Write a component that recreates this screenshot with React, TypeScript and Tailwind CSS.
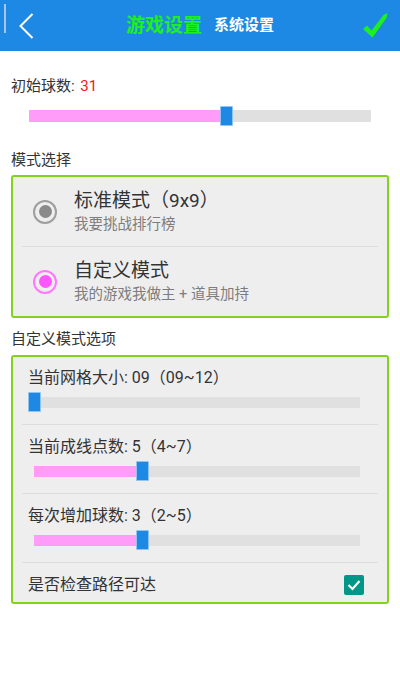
import React from "react";

type SliderProps = {
  fraction: number;
  trackH: number;
};

function Slider({ fraction, trackH }: SliderProps) {
  // thumb is 13px wide, centred on the value
  return (
    <div className="relative flex h-[20px] items-center">
      <div className="w-full bg-[#e0e0e0]" style={{ height: trackH }}>
        <div
          className="h-full bg-[#ff9cf9]"
          style={{ width: `calc(${fraction * 100}% - 6.5px)` }}
        />
      </div>
      <div
        className="absolute top-0 h-[20px] w-[13px] rounded-[1px] border border-[#8ec3f2] bg-[#1e88e5]"
        style={{ left: `calc(${fraction * 100}% - 6.5px)` }}
      />
    </div>
  );
}

function Radio({ on }: { on: boolean }) {
  return (
    <div
      className={
        on
          ? "flex h-[24px] w-[24px] items-center justify-center rounded-full border-2 border-[#ff77ff]"
          : "flex h-[24px] w-[24px] items-center justify-center rounded-full border-2 border-[#9e9e9e]"
      }
    >
      <div
        className={
          on
            ? "h-[13px] w-[13px] rounded-full bg-[#ff55ff]"
            : "h-[13px] w-[13px] rounded-full bg-[#8a8a8a]"
        }
      />
    </div>
  );
}

export default function App() {
  const modes = [
    { title: "标准模式（9x9）", sub: "我要挑战排行榜", on: false },
    { title: "自定义模式", sub: "我的游戏我做主 + 道具加持", on: true },
  ];

  const options = [
    { label: "当前网格大小: 09（09~12）", fraction: 0 },
    { label: "当前成线点数: 5（4~7）", fraction: 1 / 3 },
    { label: "每次增加球数: 3（2~5）", fraction: 1 / 3 },
  ];

  return (
    <div className="h-[685px] w-[400px] bg-white font-[Roboto,'Noto_Sans_CJK_SC',sans-serif] text-[#333]">
      {/* header */}
      <div className="flex h-[51px] items-center justify-between bg-[#1e88e5]">
        <div className="flex h-full w-[60px] items-start">
          <div className="ml-[4px] mt-[4px] h-[29px] w-[2px] bg-[#a8c4e6]" />
          <svg className="ml-[13px] mt-[13px]" width="15" height="26" viewBox="0 0 15 26">
            <path d="M13.5 1 L1.5 13 L13.5 25" fill="none" stroke="white" strokeWidth="2" />
          </svg>
        </div>
        <div className="flex items-center gap-[12px]">
          <span className="text-[19px] font-bold leading-none text-[#1ef01e]">游戏设置</span>
          <span className="text-[15px] font-bold leading-none text-white">系统设置</span>
        </div>
        <div className="flex w-[60px] justify-end pr-[12px]">
          <svg width="25" height="26" viewBox="0 0 25 26">
            <path
              d="M0 16 L4 12.5 L8.5 17.5 L20.5 2 L24.5 0 L23.5 5 L9.5 24.5 Z"
              fill="#1ef01e"
            />
          </svg>
        </div>
      </div>

      <div className="px-[11px]">
        {/* initial balls */}
        <div className="pt-[24px] text-[15px] leading-[22px]">
          初始球数: <span className="ml-[2px] text-[#f01818]">31</span>
        </div>
        <div className="mx-[18px] mt-[9px]">
          <Slider fraction={0.5775} trackH={12} />
        </div>

        {/* mode select */}
        <div className="mt-[23px] text-[15px] leading-[22px]">模式选择</div>
        <div className="mt-[4px] rounded-[3px] border-2 border-[#84d21c] bg-[#eeeeee]">
          {modes.map((m, i) => (
            <div key={m.title}>
              {i > 0 && <div className="mx-[9px] h-px bg-[#dcdcdc]" />}
              <div className="flex items-center pb-[11px] pl-[20px] pt-[11px]">
                <Radio on={m.on} />
                <div className="ml-[17px]">
                  <div className="text-[19px] leading-[26px] text-[#333]">{m.title}</div>
                  <div className="mt-[1px] text-[14.5px] leading-[20px] text-[#7d7d7d]">{m.sub}</div>
                </div>
              </div>
            </div>
          ))}
        </div>

        {/* custom options */}
        <div className="mt-[10px] text-[15px] leading-[22px]">自定义模式选项</div>
        <div className="mt-[5px] rounded-[3px] border-2 border-[#84d21c] bg-[#eeeeee]">
          {options.map((o, i) => (
            <div key={o.label}>
              {i > 0 && <div className="mx-[9px] h-px bg-[#dcdcdc]" />}
              <div className={i === 0 ? "pb-[12px] pt-[9px]" : "pb-[12px] pt-[10px]"}>
                <div className="pl-[15px] text-[16px] leading-[24px]">{o.label}</div>
                <div className="ml-[21px] mr-[27px] mt-[2px]">
                  <Slider fraction={o.fraction} trackH={11} />
                </div>
              </div>
            </div>
          ))}
          <div className="mx-[9px] h-px bg-[#dcdcdc]" />
          <div className="flex items-center justify-between pb-[5px] pl-[15px] pr-[23px] pt-[10px]">
            <span className="text-[16px] leading-[24px]">是否检查路径可达</span>
            <div className="flex h-[20px] w-[20px] items-center justify-center rounded-[2px] bg-[#009688]">
              <svg width="14" height="12" viewBox="0 0 14 12">
                <path d="M1.5 6 L5.5 10 L12.5 2" fill="none" stroke="white" strokeWidth="2.2" />
              </svg>
            </div>
          </div>
        </div>
      </div>
    </div>
  );
}
